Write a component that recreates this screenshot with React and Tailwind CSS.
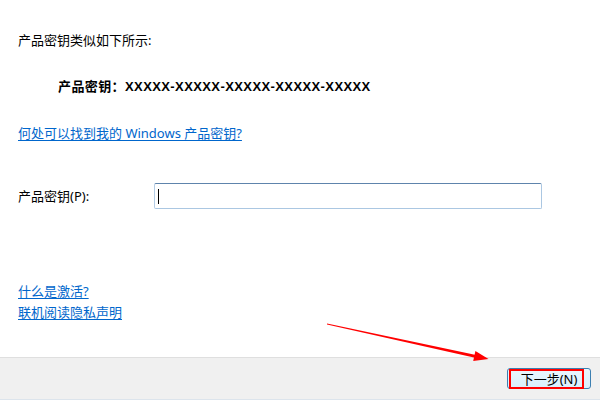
export default function App() {
  const font = { fontFamily: '"Noto Sans", "Noto Sans CJK SC", sans-serif' };
  const bold = { fontFamily: '"Liberation Sans", "Noto Sans CJK SC", sans-serif' };
  return (
    <div className="w-[600px] h-[400px] flex flex-col relative overflow-hidden bg-white text-[13px] leading-[16px] text-black" style={font}>
      <div className="h-[357px] flex flex-col pl-[18px]">
        <div className="mt-[32px]">产品密钥类似如下所示:</div>
        <div className="mt-[31px] pl-[40px] font-bold tracking-[0.4px]" style={bold}>产品密钥：XXXXX-XXXXX-XXXXX-XXXXX-XXXXX</div>
        <div className="mt-[30px]">
          <a className="text-[#0066cc] underline underline-offset-2">何处可以找到我的 Windows 产品密钥?</a>
        </div>
        <div className="mt-[42px] flex items-center">
          <div className="w-[136px]">产品密钥(P):</div>
          <div className="w-[388px] h-[26px] border border-[#abc7e2] border-t-[#5e84ac] border-l-[#b4cde6] rounded-[2px] bg-white flex items-center pl-[3px]">
            <div className="w-[1px] h-[15px] bg-black" />
          </div>
        </div>
        <div className="mt-[74px] flex flex-col gap-[5px]">
          <a className="text-[#0066cc] underline underline-offset-2">什么是激活?</a>
          <a className="text-[#0066cc] underline underline-offset-2">联机阅读隐私声明</a>
        </div>
      </div>
      <div className="flex-1 bg-[#f0f0f0] border-t border-[#dfdfdf] border-b border-b-[#dce4ec] flex justify-end items-start pt-[10px] pr-[9px]">
        <div className="relative w-[84px] h-[21px] rounded-[3px] border border-[#3c7fb1] bg-gradient-to-b from-[#eaf6fd] to-[#d9effc] flex items-center justify-center">
          <span className="relative z-10">下一步(N)</span>
          <div className="absolute left-[1px] top-[0px] w-[75px] h-[20px] border-2 border-[#ff0000]" />
        </div>
      </div>
      <svg className="absolute left-0 top-0 pointer-events-none" width="600" height="400">
        <polygon points="327,323.5 476,355 475,357.8 327,324.6" fill="#ff0000" />
        <polygon points="488.5,359 475.4,351.1 473.2,360.9" fill="#ff0000" />
      </svg>
    </div>
  );
}
